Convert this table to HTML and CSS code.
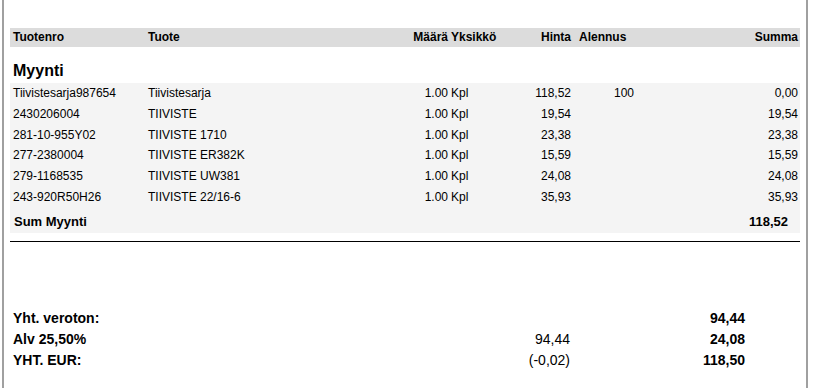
FILE: index.html
```html
<!DOCTYPE html>
<html lang="fi">
<head>
<meta charset="utf-8">
<title>Myynti</title>
<link rel="stylesheet" href="styles.css">
</head>
<body>
<div class="page">
  <table class="items">
    <colgroup>
      <col class="w-code"><col class="w-name"><col class="w-qty"><col class="w-unit"><col class="w-price"><col class="w-disc"><col class="w-sum">
    </colgroup>
    <thead>
      <tr class="head">
        <th class="l">Tuotenro</th>
        <th class="l">Tuote</th>
        <th class="qty">Määrä</th>
        <th class="unit">Yksikkö</th>
        <th class="price">Hinta</th>
        <th class="disc">Alennus</th>
        <th class="sum">Summa</th>
      </tr>
    </thead>
    <tbody>
      <tr class="group"><td colspan="7">Myynti</td></tr>
    </tbody>
    <tbody class="rows">
      <tr><td class="l">Tiivistesarja987654</td><td class="l">Tiivistesarja</td><td class="qty">1.00</td><td class="unit">Kpl</td><td class="price">118,52</td><td class="disc"><span class="disc-val">100</span></td><td class="sum">0,00</td></tr>
      <tr><td class="l">2430206004</td><td class="l">TIIVISTE</td><td class="qty">1.00</td><td class="unit">Kpl</td><td class="price">19,54</td><td class="disc"></td><td class="sum">19,54</td></tr>
      <tr><td class="l">281-10-955Y02</td><td class="l">TIIVISTE 1710</td><td class="qty">1.00</td><td class="unit">Kpl</td><td class="price">23,38</td><td class="disc"></td><td class="sum">23,38</td></tr>
      <tr><td class="l">277-2380004</td><td class="l">TIIVISTE ER382K</td><td class="qty">1.00</td><td class="unit">Kpl</td><td class="price">15,59</td><td class="disc"></td><td class="sum">15,59</td></tr>
      <tr><td class="l">279-1168535</td><td class="l">TIIVISTE UW381</td><td class="qty">1.00</td><td class="unit">Kpl</td><td class="price">24,08</td><td class="disc"></td><td class="sum">24,08</td></tr>
      <tr><td class="l">243-920R50H26</td><td class="l">TIIVISTE 22/16-6</td><td class="qty">1.00</td><td class="unit">Kpl</td><td class="price">35,93</td><td class="disc"></td><td class="sum">35,93</td></tr>
      <tr class="subtotal"><td class="st-label" colspan="6">Sum Myynti</td><td class="st-val">118,52</td></tr>
    </tbody>
  </table>
  <div class="rule"></div>
  <div class="totals">
    <div class="t-label">Yht. veroton:</div><div class="t-mid"></div><div class="t-val">94,44</div>
    <div class="t-label">Alv 25,50%</div><div class="t-mid">94,44</div><div class="t-val">24,08</div>
    <div class="t-label">YHT. EUR:</div><div class="t-mid">(-0,02)</div><div class="t-val">118,50</div>
  </div>
</div>
</body>
</html>
```

FILE: styles.css
```css
html, body {
  margin: 0;
  padding: 0;
  background: #ffffff;
}

body {
  font-family: "Liberation Sans", Arial, sans-serif;
  font-size: 12px;
  color: #000000;
}

.page {
  box-sizing: border-box;
  width: 806px;
  min-height: 388px;
  margin-left: 2px;
  border-left: 2px solid #a0a0a0;
  border-right: 2px solid #a0a0a0;
  padding: 28px 6px 0 6px;
}

.items {
  width: 790px;
  border-collapse: collapse;
  table-layout: fixed;
}

.w-code { width: 135px; }
.w-name { width: 265px; }
.w-qty { width: 39px; }
.w-unit { width: 81px; }
.w-price { width: 43px; }
.w-disc { width: 87px; }
.w-sum { width: 140px; }

.items th,
.items td {
  padding: 0;
  white-space: nowrap;
  overflow: hidden;
}

.head th {
  background: #dcdcdc;
  font-weight: bold;
  height: 19px;
  line-height: 19px;
}

.l { text-align: left; padding-left: 3px !important; }
.qty { text-align: right; padding-right: 1px !important; }
.unit { text-align: left; padding-left: 2px !important; }
.price { text-align: right; padding-right: 2px !important; }
.disc { text-align: left; padding-left: 6px !important; }
.sum { text-align: right; padding-right: 2px !important; }

.disc-val { padding-left: 35px; }

.group td {
  font-size: 16px;
  font-weight: bold;
  line-height: 19px;
  padding: 14px 0 3px 3px;
}

.rows { background: #f4f4f4; }

.rows td {
  height: 20.8px;
  line-height: 20.8px;
}

.subtotal td {
  font-size: 13px;
  font-weight: bold;
  height: 23px;
  line-height: 23px;
  padding-top: 2px;
}

.st-label { padding-left: 4px !important; }
.st-val { text-align: right; padding-right: 12px !important; }

.rule {
  width: 790px;
  margin-top: 8px;
  border-top: 1px solid #000000;
}

.totals {
  margin-top: 66px;
  width: 735px;
  display: grid;
  grid-template-columns: 490px 70px 175px;
  grid-auto-rows: 21px;
  line-height: 21px;
  font-size: 14px;
}

.t-label {
  font-weight: bold;
  padding-left: 3px;
}

.t-mid { text-align: right; }

.t-val {
  text-align: right;
  font-weight: bold;
}
```
